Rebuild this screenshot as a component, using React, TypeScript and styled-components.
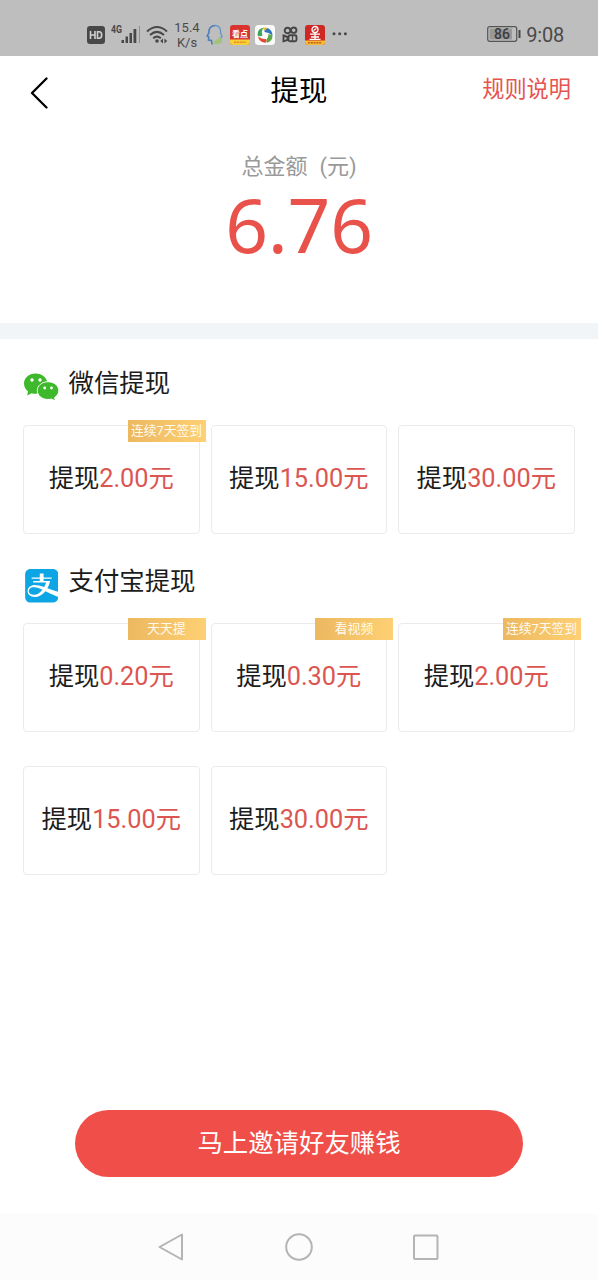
import React from "react";
import styled, { createGlobalStyle } from "styled-components";
import { SiAlipay } from "react-icons/si";

const GlobalStyle = createGlobalStyle`
  * { box-sizing: border-box; }
  body {
    margin: 0;
    background: #fff;
    font-family: Roboto, "Noto Sans CJK SC", sans-serif;
    color: #1c1c1c;
  }
`;

const Screen = styled.div`
  width: 598px;
  height: 1280px;
  display: flex;
  flex-direction: column;
  background: #fff;
  overflow: hidden;
`;

const StatusBar = styled.header`
  height: 56px;
  flex: none;
  display: flex;
  align-items: center;
  justify-content: space-between;
  padding: 13px 34px 0 87px;
  background: #bebebe;
  color: #4a4a4a;
`;

const StatusGroup = styled.div`
  display: flex;
  align-items: center;
`;

const StatusIcon = styled.svg<{ $gap?: number }>`
  display: block;
  flex: none;
  margin-right: ${(p) => p.$gap ?? 5}px;
`;

const Speed = styled.div`
  width: 26px;
  margin-right: 6px;
  font-size: 13px;
  line-height: 15px;
  text-align: center;
  white-space: nowrap;
`;

const Clock = styled.span`
  font-size: 20px;
  line-height: 24px;
  letter-spacing: -0.2px;
`;

const NavBar = styled.div`
  height: 72px;
  flex: none;
  display: grid;
  grid-template-columns: 1fr auto 1fr;
  align-items: center;
  padding: 0 27px 0 29px;
`;

const BackIcon = styled.svg`
  display: block;
  margin-top: 2px;
`;

const Title = styled.h1`
  margin: 0 2px 0 0;
  font-size: 28.4px;
  font-weight: 400;
  line-height: 40px;
  color: #000;
`;

const RulesLink = styled.span`
  justify-self: end;
  font-size: 22.2px;
  line-height: 32px;
  margin-top: -7px;
  color: #e5544f;
`;

const Balance = styled.section`
  height: 195px;
  flex: none;
  padding-top: 24px;
  text-align: center;
`;

const BalanceLabel = styled.div`
  font-size: 22px;
  line-height: 30px;
  color: #999;
`;

const LabelUnit = styled.span`
  margin-left: 12px;
`;

const BalanceValue = styled.div`
  font-family: "Noto Sans", sans-serif;
  font-size: 75px;
  line-height: 84px;
  letter-spacing: -0.3px;
  color: #e8524b;
`;

const Divider = styled.div`
  height: 16px;
  flex: none;
  background: #f1f5f8;
`;

const Methods = styled.main`
  flex: 1;
  padding: 0 23px;
`;

const Method = styled.section`
  height: 198px;
`;

const MethodHeader = styled.div`
  height: 86px;
  display: flex;
  align-items: center;
  padding-top: 10px;
`;

const MethodIcon = styled.span`
  width: 36px;
  height: 36px;
  margin-right: 9.5px;
  display: flex;
  align-items: center;
  justify-content: center;
  flex: none;
`;

const AlipayIcon = styled(SiAlipay)`
  flex: none;
  margin: 2px 0 0 1px;
  font-size: 33.5px;
  color: #0ea5e4;
`;

const MethodName = styled.h2`
  margin: -9px 0 0;
  font-size: 25.4px;
  font-weight: 400;
  line-height: 36px;
`;

const Options = styled.div`
  display: grid;
  grid-template-columns: repeat(3, 176.5px);
  gap: 34px 11px;
`;

const Option = styled.button`
  position: relative;
  height: 109px;
  padding: 0 0 1px;
  border: 1px solid #ebebeb;
  border-radius: 4px;
  background: #fff;
  font: inherit;
  font-size: 25.3px;
  line-height: 36px;
  color: #1c1c1c;
  white-space: nowrap;
`;

const Price = styled.span`
  color: #dc5651;
`;

const Badge = styled.span`
  position: absolute;
  top: -6px;
  right: -7px;
  width: 78px;
  height: 22px;
  background: linear-gradient(90deg, #ecb860, #fed073);
  color: #fffaf0;
  font-size: 12.8px;
  line-height: 21px;
  text-align: center;
`;

const Footer = styled.div`
  flex: none;
  height: 104px;
  display: flex;
  justify-content: center;
  align-items: flex-start;
`;

const InviteButton = styled.button`
  width: 448px;
  height: 67px;
  padding: 0 0 1px;
  border: 0;
  border-radius: 34px;
  background: #f04f49;
  color: #fff;
  font: inherit;
  font-size: 25.4px;
  line-height: 36px;
`;

const SystemNav = styled.nav`
  flex: none;
  height: 66px;
  display: flex;
  justify-content: center;
  align-items: center;
  gap: 99px;
  background: #fcfcfc;
`;

function WechatIcon() {
  return (
    <svg width="36" height="28" viewBox="0 0 36 28">
      <path
        fill="#3eb92b"
        d="M12.5.5C5.700.5 1 5 1 10.600c0 3.200 1.500 6 4 7.900L4.200 22.500l4.500-2.300c1.300.4 2.500.6 3.800.6 6.800 0 12-4.500 12-10S19.300.5 12.500.5z"
      />
      <path
        fill="#3eb92b"
        stroke="#fff"
        strokeWidth="1"
        d="M25 8.700c-6.100 0-10.700 4-10.700 8.900s4.600 8.900 10.700 8.900c1.300 0 2.500-.2 3.600-.5l3.900 2-.9-3.400c2.500-1.600 4.200-4.100 4.200-7 0-4.900-4.700-8.900-10.800-8.900z"
      />
      <g fill="#fff">
        <circle cx="9" cy="7" r="1.700" />
        <circle cx="17" cy="7" r="1.700" />
        <circle cx="21.700" cy="15" r="1.400" />
        <circle cx="28.500" cy="15" r="1.400" />
      </g>
    </svg>
  );
}

type Offer = { amount: string; tag?: string };

const wechatOffers: Offer[] = [
  { amount: "2.00", tag: "连续7天签到" },
  { amount: "15.00" },
  { amount: "30.00" },
];

const alipayOffers: Offer[] = [
  { amount: "0.20", tag: "天天提" },
  { amount: "0.30", tag: "看视频" },
  { amount: "2.00", tag: "连续7天签到" },
  { amount: "15.00" },
  { amount: "30.00" },
];

function OfferGrid({ offers }: { offers: Offer[] }) {
  return (
    <Options>
      {offers.map((o) => (
        <Option key={o.amount}>
          提现<Price>{o.amount}元</Price>
          {o.tag && <Badge>{o.tag}</Badge>}
        </Option>
      ))}
    </Options>
  );
}

function Status() {
  return (
    <StatusBar>
      <StatusGroup>
        <StatusIcon width="18" height="18" $gap={6}>
          <rect width="18" height="18" rx="3" fill="#484848" />
          <path
            d="M3.500 5v8M8 5v8M3.500 9H8M10.500 5.800h1.700q2.500 0 2.500 3.200t-2.500 3.200h-1.700z"
            fill="none"
            stroke="#d0d0d0"
            strokeWidth="1.600"
          />
        </StatusIcon>
        <StatusIcon width="30" height="22" $gap={5}>
          <text x="0" y="9" fontSize="10" fontWeight="700" fill="#484848" textLength="11" lengthAdjust="spacingAndGlyphs">
            4G
          </text>
          <g fill="#484848">
            <rect x="10.500" y="16" width="2.500" height="3" />
            <rect x="14.500" y="12.500" width="2.500" height="6.500" />
            <rect x="18.500" y="9" width="2.500" height="10" />
            <rect x="22.500" y="5" width="2.800" height="14" />
          </g>
          <rect x="28" y="2" width="1" height="17" fill="#8f8f8f" />
        </StatusIcon>
        <StatusIcon width="22" height="20" viewBox="0 0 22 20" $gap={6}>
          <g fill="none" stroke="#484848" strokeWidth="2">
            <path d="M1 6.500Q11-2.500 21 6.500" />
            <path d="M4 10Q11 3.800 18 10" />
            <path d="M7.200 13.200Q11 10 14.800 13.200" />
          </g>
          <circle cx="11" cy="16" r="1.800" fill="#484848" />
          <path d="M17 13.500v5l-2.800-2.500zM18.400 13.500v5l2.800-2.500z" fill="#484848" />
        </StatusIcon>
        <Speed>
          15.4
          <br />
          K/s
        </Speed>
        <StatusIcon width="18" height="22" viewBox="0 0 18 22" $gap={6}>
          <path
            d="M9.500 1.500C4.500 1.500 2.500 5 3 8.500L1.200 12l1.600 1-.3 3 3 .5.5 4"
            fill="none"
            stroke="#4c7fb8"
            strokeWidth="1.600"
          />
          <path d="M9.500 1.500c4 .2 5.500 3.500 5 7l1.500 4-1.500 1.500.3 4" fill="none" stroke="#6598c8" strokeWidth="1.400" />
          <path d="M11 15l3-1.500 2 1.500v3.500L13 20H8l-1-1.500z" fill="#a4c27c" />
        </StatusIcon>
        <StatusIcon width="20" height="20" viewBox="0 0 20 20" $gap={5}>
          <rect width="20" height="20" rx="3" fill="#d8332e" />
          <path d="M0 14.500h20V17q0 3-3 3H3q-3 0-3-3z" fill="#f8cf35" />
          <text x="2" y="12" fontSize="8.500" fontWeight="700" fill="#fff" textLength="16" lengthAdjust="spacingAndGlyphs">
            看点
          </text>
          <path d="M4 17.300h12" stroke="#e08a2c" strokeWidth="1.500" strokeDasharray="2 .8" />
        </StatusIcon>
        <StatusIcon width="20" height="20" viewBox="0 0 20 20" $gap={7}>
          <rect width="20" height="20" rx="3.500" fill="#fafafa" />
          <path d="M2.500 10.500Q2 3.500 9 2.500Q5.500 6 7.500 10.500Q5 12 2.500 10.500z" fill="#3fa45a" />
          <path d="M9.500 5.500Q10 2.500 13 3.200Q17.500 5.500 17.500 10.500Q13.500 7 9.500 7z" fill="#2e78bd" />
          <path d="M7.500 3.500Q10 1.800 12.500 3L10 5.500z" fill="#efb52f" />
          <path d="M17.500 10.500Q17.500 16.500 12 17.800L11.500 14.500Q13.500 12.500 13.500 9z" fill="#58a844" />
          <path d="M3 11.500Q4 17.500 11 17.800Q12.500 15.500 10.500 14Q7 14.500 3 11.500z" fill="#df4a35" />
        </StatusIcon>
        <StatusIcon width="16" height="17" viewBox="0 0 16 17" $gap={7}>
          <g fill="none" stroke="#454545" strokeWidth="1.900">
            <circle cx="5.500" cy="4.500" r="2.800" />
            <circle cx="11.700" cy="4.200" r="2.700" />
            <rect x="6.500" y="9.300" width="8" height="6" rx="1.500" />
            <path d="M1.500 9.500l4 1.500v3l-4 1.300z" />
            <path d="M10.500 10v5" strokeWidth="1.200" />
          </g>
        </StatusIcon>
        <StatusIcon width="20" height="20" viewBox="0 0 20 20" $gap={7}>
          <rect width="20" height="20" rx="3" fill="#cf2724" />
          <path d="M0 15.500h20V17q0 3-3 3H3q-3 0-3-3z" fill="#f1bd35" />
          <g fill="none" stroke="#fff" strokeWidth="1.300">
            <circle cx="10" cy="4.500" r="3" />
            <path d="M8.500 5.500l3-2M5 9.200h10M6 12h8M4.500 14.300h11M10 7.500V15" />
          </g>
          <path d="M3 17.700h14" stroke="#ca5727" strokeWidth="1.500" strokeDasharray="2 .8" />
        </StatusIcon>
        <StatusIcon width="16" height="5" $gap={0}>
          <g fill="#484848">
            <circle cx="2" cy="1.700" r="1.500" />
            <circle cx="7.700" cy="1.700" r="1.500" />
            <circle cx="13.400" cy="1.700" r="1.500" />
          </g>
        </StatusIcon>
      </StatusGroup>
      <StatusGroup>
        <StatusIcon width="34" height="18" viewBox="0 0 34 18" $gap={5}>
          <rect x=".7" y=".7" width="29" height="14.600" rx="2" fill="none" stroke="#555" strokeWidth="1.200" />
          <rect x="2.500" y="2.500" width="22.500" height="11" fill="#989898" />
          <rect x="31.500" y="4" width="2" height="8" fill="#484848" />
          <text x="15" y="13" fontSize="14" fontWeight="500" fill="#3c3c3c" textAnchor="middle">
            86
          </text>
        </StatusIcon>
        <Clock>9:08</Clock>
      </StatusGroup>
    </StatusBar>
  );
}

export default function App() {
  return (
    <Screen>
      <GlobalStyle />
      <Status />
      <NavBar>
        <BackIcon width="20" height="32" viewBox="0 0 20 32" fill="none" stroke="#000" strokeWidth="2.300">
          <path d="M17.500 1.500L3 16l14.500 14.500" strokeLinecap="round" strokeLinejoin="round" />
        </BackIcon>
        <Title>提现</Title>
        <RulesLink>规则说明</RulesLink>
      </NavBar>
      <Balance>
        <BalanceLabel>
          总金额<LabelUnit>(元)</LabelUnit>
        </BalanceLabel>
        <BalanceValue>6.76</BalanceValue>
      </Balance>
      <Divider />
      <Methods>
        <Method>
          <MethodHeader>
            <MethodIcon>
              <WechatIcon />
            </MethodIcon>
            <MethodName>微信提现</MethodName>
          </MethodHeader>
          <OfferGrid offers={wechatOffers} />
        </Method>
        <Method>
          <MethodHeader>
            <MethodIcon>
              <AlipayIcon />
            </MethodIcon>
            <MethodName>支付宝提现</MethodName>
          </MethodHeader>
          <OfferGrid offers={alipayOffers} />
        </Method>
      </Methods>
      <Footer>
        <InviteButton>马上邀请好友赚钱</InviteButton>
      </Footer>
      <SystemNav>
        <svg width="28" height="28" viewBox="0 0 28 28" fill="none" stroke="#b4b4b4" strokeWidth="2" strokeLinejoin="round">
          <path d="M24 1.500v25L1.500 14z" />
        </svg>
        <svg width="28" height="28" viewBox="0 0 28 28" fill="none" stroke="#b4b4b4" strokeWidth="2">
          <circle cx="14" cy="14" r="12.800" />
        </svg>
        <svg width="28" height="28" viewBox="0 0 28 28" fill="none" stroke="#b4b4b4" strokeWidth="2">
          <rect x="2" y="2.500" width="23.500" height="23.500" rx="1" />
        </svg>
      </SystemNav>
    </Screen>
  );
}
